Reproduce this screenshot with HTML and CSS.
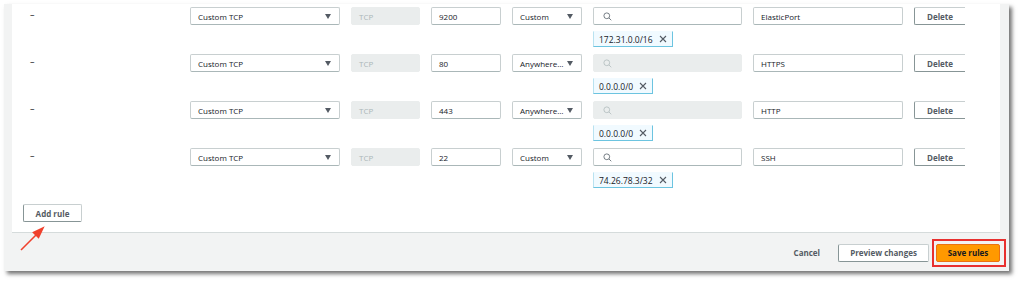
FILE: index.html
```html
<!DOCTYPE html>
<html lang="en">
<head>
    <meta charset="UTF-8">
    <meta name="viewport" content="width=device-width, initial-scale=1.0">
    <title>Edit inbound rules</title>
    <link rel="stylesheet" href="styles.css">
</head>
<body>

    <div class="panel">
        <!-- Rules card -->
        <div class="card">

            <div class="rule">
                <span class="dash">–</span>
                <div class="field select">Custom TCP<span class="caret"></span></div>
                <div class="field disabled">TCP</div>
                <div class="field">9200</div>
                <div class="field select">Custom<span class="caret"></span></div>
                <div class="source">
                    <div class="field search">
                        <svg class="icon" viewBox="0 0 10 10"><circle cx="4.2" cy="4.2" r="3.2"/><line x1="6.6" y1="6.6" x2="9.2" y2="9.2"/></svg>
                    </div>
                    <span class="token">172.31.0.0/16
                        <svg class="close" viewBox="0 0 8 8"><path d="M1 1L7 7M7 1L1 7"/></svg>
                    </span>
                </div>
                <div class="field">ElasticPort</div>
                <div class="delete-cell"><button class="btn">Delete</button></div>
            </div>

            <div class="rule">
                <span class="dash">–</span>
                <div class="field select">Custom TCP<span class="caret"></span></div>
                <div class="field disabled">TCP</div>
                <div class="field">80</div>
                <div class="field select">Anywhere…<span class="caret"></span></div>
                <div class="source">
                    <div class="field search disabled">
                        <svg class="icon" viewBox="0 0 10 10"><circle cx="4.2" cy="4.2" r="3.2"/><line x1="6.6" y1="6.6" x2="9.2" y2="9.2"/></svg>
                    </div>
                    <span class="token">0.0.0.0/0
                        <svg class="close" viewBox="0 0 8 8"><path d="M1 1L7 7M7 1L1 7"/></svg>
                    </span>
                </div>
                <div class="field">HTTPS</div>
                <div class="delete-cell"><button class="btn">Delete</button></div>
            </div>

            <div class="rule">
                <span class="dash">–</span>
                <div class="field select">Custom TCP<span class="caret"></span></div>
                <div class="field disabled">TCP</div>
                <div class="field">443</div>
                <div class="field select">Anywhere…<span class="caret"></span></div>
                <div class="source">
                    <div class="field search disabled">
                        <svg class="icon" viewBox="0 0 10 10"><circle cx="4.2" cy="4.2" r="3.2"/><line x1="6.6" y1="6.6" x2="9.2" y2="9.2"/></svg>
                    </div>
                    <span class="token">0.0.0.0/0
                        <svg class="close" viewBox="0 0 8 8"><path d="M1 1L7 7M7 1L1 7"/></svg>
                    </span>
                </div>
                <div class="field">HTTP</div>
                <div class="delete-cell"><button class="btn">Delete</button></div>
            </div>

            <div class="rule">
                <span class="dash">–</span>
                <div class="field select">Custom TCP<span class="caret"></span></div>
                <div class="field disabled">TCP</div>
                <div class="field">22</div>
                <div class="field select">Custom<span class="caret"></span></div>
                <div class="source">
                    <div class="field search">
                        <svg class="icon" viewBox="0 0 10 10"><circle cx="4.2" cy="4.2" r="3.2"/><line x1="6.6" y1="6.6" x2="9.2" y2="9.2"/></svg>
                    </div>
                    <span class="token">74.26.78.3/32
                        <svg class="close" viewBox="0 0 8 8"><path d="M1 1L7 7M7 1L1 7"/></svg>
                    </span>
                </div>
                <div class="field">SSH</div>
                <div class="delete-cell"><button class="btn">Delete</button></div>
            </div>

            <button class="btn add-rule">Add rule</button>
        </div>

        <!-- Footer actions -->
        <div class="footer">
            <button class="link">Cancel</button>
            <button class="btn">Preview changes</button>
            <span class="highlight"><button class="btn primary">Save rules</button></span>
        </div>

        <!-- annotation arrow -->
        <svg class="arrow" viewBox="0 0 26 26">
            <line x1="2" y1="24" x2="20" y2="6"/>
            <path d="M24 2L14.5 6.5L19.5 11.5Z"/>
        </svg>
    </div>

</body>
</html>
```

FILE: styles.css
```css
body {
    margin: 0;
    background: #fff;
    font-family: 'Open Sans', 'Noto Sans', sans-serif;
    font-size: 8px;
    color: #16191f;
    height: 287px;
    overflow: hidden;
}
.panel {
    position: relative;
    margin: 4px 0 0 4px;
    width: 1005px;
    height: 267px;
    background: #f2f3f3;
    box-shadow: 3px 3px 4px rgba(0, 0, 0, 0.55);
}
.card {
    margin-left: 8px;
    width: 988px;
    height: 229px;
    box-sizing: border-box;
    padding: 3px 0 0 11px;
    background: #fff;
    border-bottom: 1px solid #d5dbdb;
}
.rule {
    display: grid;
    grid-template-columns: 149px 150px 69px 70px 70px 149px 150px 51px;
    column-gap: 11px;
    align-items: start;
    height: 47px;
    margin-left: 7px;
}
.dash {
    line-height: 16px;
    font-size: 9px;
    color: #16191f;
}
.field {
    position: relative;
    height: 18px;
    box-sizing: border-box;
    padding: 0 7px;
    display: flex;
    align-items: center;
    border: 1px solid #c8cfd0;
    border-bottom-color: #aab7b8;
    border-radius: 2px;
    background: #fff;
    white-space: nowrap;
}
.field.disabled {
    background: #eaeded;
    border-color: #eaeded;
    color: #aab7b8;
}
.select {
    justify-content: space-between;
    padding-right: 8px;
}
.caret {
    width: 0;
    height: 0;
    border-left: 3.5px solid transparent;
    border-right: 3.5px solid transparent;
    border-top: 5px solid #545b64;
}
.source {
    display: flex;
    flex-direction: column;
    align-items: flex-start;
    gap: 6px;
}
.search {
    width: 149px;
    padding-left: 9px;
}
.icon {
    width: 9px;
    height: 9px;
    fill: none;
    stroke: #687078;
    stroke-width: 1;
}
.disabled .icon {
    stroke: #b7c1c2;
}
.token {
    display: inline-flex;
    align-items: center;
    gap: 6px;
    height: 16px;
    box-sizing: border-box;
    padding: 0 5px;
    font-size: 8.5px;
    background: #f1faff;
    border: 1px solid #b9e2f0;
    border-top-color: #f1faff;
    border-right-color: #6cc4e0;
    border-bottom-color: #6cc4e0;
    color: #16191f;
    white-space: nowrap;
}
.close {
    width: 8px;
    height: 8px;
    fill: none;
    stroke: #545b64;
    stroke-width: 1.1;
}
.delete-cell {
    overflow: hidden;
}
.btn {
    font-family: inherit;
    font-size: 8px;
    font-weight: 700;
    color: #545b64;
    background: #fff;
    height: 18px;
    padding: 0 12px;
    border: 1px solid #c8cfd0;
    border-left-color: #879596;
    border-bottom-color: #879596;
    border-radius: 2px;
    white-space: nowrap;
    cursor: pointer;
}
.delete-cell .btn {
    width: 56px;
    text-align: left;
    padding: 0 0 0 12px;
}
.add-rule {
    margin-top: 9px;
    width: 59px;
    padding: 0;
}
.footer {
    display: flex;
    justify-content: flex-end;
    align-items: center;
    height: 38px;
    padding: 1px 3px 0 0;
    box-sizing: border-box;
}
.link {
    font-family: inherit;
    font-size: 8px;
    font-weight: 700;
    color: #545b64;
    background: none;
    border: none;
    padding: 0;
    margin-right: 18px;
}
.footer > .btn {
    width: 91px;
    padding: 0;
}
.highlight {
    display: flex;
    margin-left: 3px;
    padding: 3px 4px 3px 2px;
    border: 2px solid #e8302f;
}
.btn.primary {
    width: 64px;
    padding: 0;
    background: #ff9900;
    border-color: #ec7211;
    color: #16191f;
}
.arrow {
    position: absolute;
    left: 15px;
    top: 222px;
    width: 26px;
    height: 26px;
    stroke: #f0412d;
    stroke-width: 1.6;
    fill: #f0412d;
}
```
